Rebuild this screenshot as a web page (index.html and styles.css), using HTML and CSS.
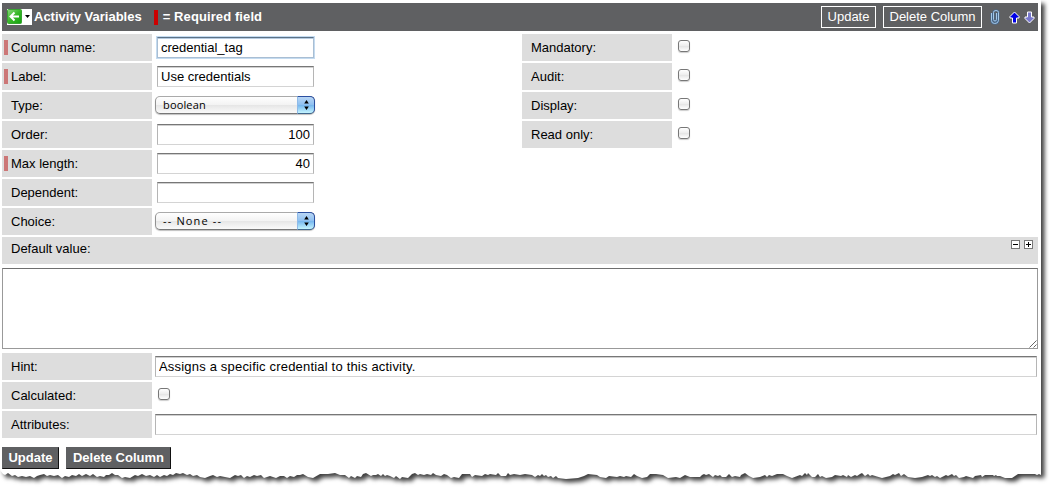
FILE: index.html
```html
<!DOCTYPE html>
<html lang="en">
<head>
<meta charset="utf-8">
<title>Activity Variables</title>
<link rel="stylesheet" href="styles.css">
</head>
<body>
<svg class="paper" width="1051" height="489" viewBox="0 0 1051 489" aria-hidden="true">
  <defs>
    <filter id="shade" filterUnits="userSpaceOnUse" x="0" y="0" width="1051" height="489" color-interpolation-filters="sRGB">
      <feDropShadow dx="3.5" dy="3.5" stdDeviation="2.1" flood-color="#000" flood-opacity=".75"/>
    </filter>
  </defs>
  <path class="sheet" filter="url(#shade)" d="M0 0H1041V475L1039 474 1037 475 1035 474 1018 474 1012 478 1005 478 1000 476 997 476 996 475 994 476 993 475 985 475 982 477 981 475 975 476 973 478 966 476 964 477 959 478 956 475 954 476 952 474 948 476 946 475 940 478 937 476 935 477 932 475 930 476 928 475 922 477 915 478 908 477 904 474 901 476 899 473 895 475 893 474 890 476 882 478 872 475 870 476 868 474 865 476 862 473 860 474 857 476 855 475 851 477 848 475 847 477 843 475 841 476 835 475 832 477 826 478 822 476 820 477 818 474 815 477 812 477 808 473 807 475 805 473 802 476 800 475 792 478 787 476 783 474 777 474 772 476 769 475 767 477 765 475 760 477 753 478 749 476 745 473 741 475 740 477 735 476 732 477 729 474 726 477 722 477 720 475 718 476 715 475 713 477 709 474 706 475 704 474 702 475 700 477 690 477 685 475 680 478 676 477 668 478 663 475 656 474 650 474 647 477 642 478 637 476 634 474 631 477 626 476 624 477 620 476 617 477 609 476 606 478 600 477 597 475 588 474 584 476 578 478 566 479 558 478 556 476 553 478 551 476 548 477 546 475 544 476 542 474 540 476 538 475 535 477 532 475 525 474 520 475 514 474 510 475 508 473 506 476 501 476 498 473 496 475 490 474 488 475 485 474 482 476 475 475 472 477 470 474 465 474 462 474 459 478 454 477 451 478 447 475 444 474 441 476 436 475 433 473 431 475 427 474 424 475 420 474 418 475 415 473 412 474 408 478 402 477 400 479 396 476 394 478 390 476 387 475 385 476 383 474 381 476 378 474 376 475 373 475 371 476 366 473 363 474 361 477 357 476 355 478 351 476 349 478 345 475 340 475 335 473 328 474 320 474 313 478 308 477 303 474 300 475 297 475 294 477 290 476 287 478 284 476 280 476 276 478 270 476 264 478 261 475 257 476 254 475 250 477 247 476 244 478 241 475 238 476 235 475 230 478 225 477 220 476 217 477 213 475 210 476 205 478 200 477 197 475 193 476 190 474 187 475 183 473 180 474 176 473 173 475 170 474 167 476 164 475 160 477 157 475 154 477 150 475 146 476 142 474 138 476 135 475 130 478 125 477 122 478 118 475 115 475 112 473 109 475 106 475 104 477 100 476 97 477 93 474 90 476 86 474 82 476 79 474 76 476 72 475 69 477 65 476 62 478 58 475 54 476 50 475 47 476 44 474 40 475 37 476 34 478 30 476 26 477 22 476 18 477 15 475 12 476 8 473 5 475 3 474 0 470Z"/>
</svg>

<main class="form">
  <header class="bar">
    <span class="back">
      <svg width="25" height="16" viewBox="0 0 25 16">
        <defs><linearGradient id="green" x1="0" y1="0" x2="1" y2="1"><stop offset="0" stop-color="#8bd87c"/><stop offset=".5" stop-color="#37b727"/><stop offset="1" stop-color="#12a00f"/></linearGradient></defs>
        <rect width="25" height="16" fill="#fff"/>
        <rect x=".5" y=".5" width="14" height="14" rx="1" fill="url(#green)" stroke="#39a431"/>
        <path d="M12 7.5H4M7.5 3.5L3.5 7.5L7.5 11.5" fill="none" stroke="#fff" stroke-width="2"/>
        <path d="M18 6h5l-2.5 3z" fill="#000"/>
      </svg>
    </span>
    <span class="title">Activity Variables</span>
    <span class="required-key"></span>
    <span class="title key-text">= Required field</span>
    <div class="actions">
      <button class="outline update">Update</button>
      <button class="outline delete">Delete Column</button>
      <svg class="clip" width="10" height="16" viewBox="0 0 10 16" fill="none">
        <path d="M1.5 4V11.5Q1.5 14.5 4.8 14.5T8.5 11.5V3.5Q8.5 1.5 6 1.5T3.5 3.5V10.5Q3.5 12 5 12T6.5 10.5V4" stroke="#46688f" stroke-width="2"/>
        <path d="M1.5 4V11.5Q1.5 14.5 4.8 14.5T8.5 11.5V3.5Q8.5 1.5 6 1.5T3.5 3.5V10.5Q3.5 12 5 12T6.5 10.5V4" stroke="#a5c9e8"/>
      </svg>
      <svg class="up" width="11" height="13" viewBox="0 0 11 13"><path d="M5.5 1L10 5.5V7H7.5V12H3.5V7H1V5.5Z" fill="#0000e6" stroke="#fff"/></svg>
      <svg class="down" width="11" height="13" viewBox="0 0 11 13"><path d="M5.5 12L10 7.5V6H7.5V1H3.5V6H1V7.5Z" fill="#7777cc" stroke="#fff"/></svg>
    </div>
  </header>

  <section class="columns">
    <div class="rows">
      <div class="row"><label class="label must">Column name:</label><input class="field focused" value="credential_tag"></div>
      <div class="row"><label class="label must">Label:</label><input class="field" value="Use credentials"></div>
      <div class="row"><label class="label">Type:</label><div class="popup"><span class="choice">boolean</span><span class="stepper"><svg width="7" height="10" viewBox="0 0 7 10"><path d="M3.5 0L5.8 3.5H1.2zM3.5 10L5.8 6.5H1.2z"/></svg></span></div></div>
      <div class="row"><label class="label">Order:</label><input class="field number" value="100"></div>
      <div class="row"><label class="label must">Max length:</label><input class="field number" value="40"></div>
      <div class="row"><label class="label">Dependent:</label><input class="field"></div>
      <div class="row"><label class="label">Choice:</label><div class="popup"><span class="choice none">-- None --</span><span class="stepper"><svg width="7" height="10" viewBox="0 0 7 10"><path d="M3.5 0L5.8 3.5H1.2zM3.5 10L5.8 6.5H1.2z"/></svg></span></div></div>
    </div>
    <div class="rows">
      <div class="row"><label class="label">Mandatory:</label><input type="checkbox" class="check"></div>
      <div class="row"><label class="label">Audit:</label><input type="checkbox" class="check"></div>
      <div class="row"><label class="label">Display:</label><input type="checkbox" class="check"></div>
      <div class="row"><label class="label">Read only:</label><input type="checkbox" class="check"></div>
    </div>
  </section>

  <div class="default-bar">
    <span>Default value:</span>
    <span class="sizers">
      <svg width="9" height="9" viewBox="0 0 9 9"><rect x=".5" y=".5" width="8" height="8" fill="#fff" stroke="#777"/><path d="M2 4.5h5" stroke="#000"/></svg>
      <svg width="9" height="9" viewBox="0 0 9 9"><rect x=".5" y=".5" width="8" height="8" fill="#fff" stroke="#777"/><path d="M2 4.5h5M4.5 2v5" stroke="#000"/></svg>
    </span>
  </div>
  <div class="area">
    <textarea class="default-value"></textarea>
    <svg class="grip" width="8" height="8" viewBox="0 0 8 8"><path d="M.5 7.5L7.5 .5M4.5 7.5L7.5 4.5" stroke="#555" stroke-width=".9"/></svg>
  </div>

  <section class="rows">
    <div class="row"><label class="label">Hint:</label><input class="field wide" value="Assigns a specific credential to this activity."></div>
    <div class="row"><label class="label">Calculated:</label><input type="checkbox" class="check"></div>
    <div class="row"><label class="label">Attributes:</label><input class="field wide"></div>
  </section>

  <footer class="footer">
    <button class="solid update">Update</button>
    <button class="solid delete">Delete Column</button>
  </footer>
</main>
</body>
</html>
```
FILE: styles.css
```css
* { box-sizing: border-box; }

body {
  margin: 0;
  height: 489px;
  overflow: hidden;
  background: #fff;
  color: #000;
  font: 13px/15px "Liberation Sans", Arial, sans-serif;
}

input, textarea, button { font: inherit; margin: 0; border-radius: 0; appearance: none; }

/* torn sheet behind the form */
.paper { position: absolute; left: 0; top: 0; z-index: -1; }
.sheet { fill: #fff; }

.form { width: 1036px; margin-left: 2px; padding-top: 3px; }

.bar {
  display: flex;
  align-items: center;
  height: 28px;
  padding-left: 5px;
  background: #5f6062;
  color: #fff;
}
.back { display: flex; margin-right: 2px; }
.title { padding-bottom: 2px; font-weight: bold; white-space: pre; }
.key-text { letter-spacing: .1px; }
.required-key { width: 4px; height: 15px; margin: 0 5px 0 12px; background: #c00; }
.actions { display: flex; align-items: center; margin-left: auto; padding-right: 3px; }

.outline {
  height: 22px;
  padding: 0 0 1px;
  border: 1px solid #fff;
  background: transparent;
  color: #fff;
}
.outline.update { width: 55px; margin-right: 7px; }
.outline.delete { width: 99px; margin-right: 8px; }
.clip { margin-right: 9px; }
.up { margin-right: 4px; }

.columns { display: grid; grid-template-columns: 520px 516px; margin-top: 3px; }
.rows { display: flex; flex-direction: column; gap: 2px; }
.row { display: flex; height: 27px; }

.label {
  position: relative;
  flex: none;
  width: 150px;
  padding: 6px 9px;
  background: #ddd;
}
.must::before {
  content: "";
  position: absolute;
  left: 2px;
  top: 6px;
  width: 4px;
  height: 15px;
  background: #cc7777;
}

.field {
  width: 157px;
  height: 21px;
  margin: 3px 0 0 5px;
  padding: 0 3px 1px;
  border: 1px solid #b5b5b5;
  border-top: 1px solid #777;
  border-bottom-color: #d4d4d4;
  background: #fff;
  box-shadow: inset 0 1px #d0d0d0;
  outline: none;
}
.focused {
  border: 1px solid #a9bed3;
  border-top-color: #5c7288;
  box-shadow: inset 0 1px #b6cbe0, 0 0 0 1px #c4dbf0;
}
.number { text-align: right; }
.wide { width: 882px; margin-left: 3px; letter-spacing: .19px; }

.popup {
  display: flex;
  width: 160px;
  height: 18px;
  margin: 4px 0 0 3px;
  border: 1px solid #929292;
  border-top-color: #aaa;
  border-bottom-color: #777;
  border-radius: 5px;
  background: linear-gradient(#fff 0%, #f3f3f3 48%, #e6e6e6 52%, #fafafa 100%);
  box-shadow: 0 1px 1px rgba(0, 0, 0, .25);
}
.choice {
  flex: 1;
  padding-left: 7px;
  font: 11px/16px "Open Sans", "Noto Sans", sans-serif;
  letter-spacing: .15px;
}
.none { letter-spacing: 1.15px; }
.stepper {
  display: flex;
  align-items: center;
  justify-content: center;
  width: 18px;
  height: 18px;
  margin: -1px -1px 0 0;
  border: 1px solid #2b4fa0;
  border-left-color: #8fbbe8;
  border-bottom-color: #3f668d;
  border-radius: 0 5px 5px 0;
  background: linear-gradient(#b9d6f5 0%, #8fc1f1 48%, #77b7ee 52%, #c4f5ff 100%);
}

.check {
  width: 12px;
  height: 12px;
  margin: 6px 0 0 6px;
  border: 1px solid #777;
  border-radius: 3px;
  background: linear-gradient(#fff, #eee 45%, #e6e6e6 55%, #fff);
  box-shadow: 0 1px 1px rgba(0, 0, 0, .2);
}

.default-bar {
  display: flex;
  justify-content: space-between;
  height: 27px;
  margin-top: 2px;
  padding: 4px 5px 0 9px;
  background: #ddd;
}
.sizers { display: flex; gap: 4px; margin-top: -1px; }

.area { position: relative; height: 81px; margin: 4px 0; }
.default-value {
  display: block;
  width: 1036px;
  height: 81px;
  border: 1px solid #999;
  border-top-color: #6f6f6f;
  background: #fff;
  resize: none;
}
.grip { position: absolute; right: 1px; bottom: 1px; }

.footer { display: flex; gap: 7px; margin-top: 9px; }
.solid {
  height: 22px;
  padding: 0 0 1px;
  border: 1px solid #5f6062;
  border-right-color: #111;
  border-bottom-color: #111;
  background: #5f6062;
  color: #fff;
  font-weight: bold;
}
.solid.update { width: 57px; }
.solid.delete { width: 105px; }
```
